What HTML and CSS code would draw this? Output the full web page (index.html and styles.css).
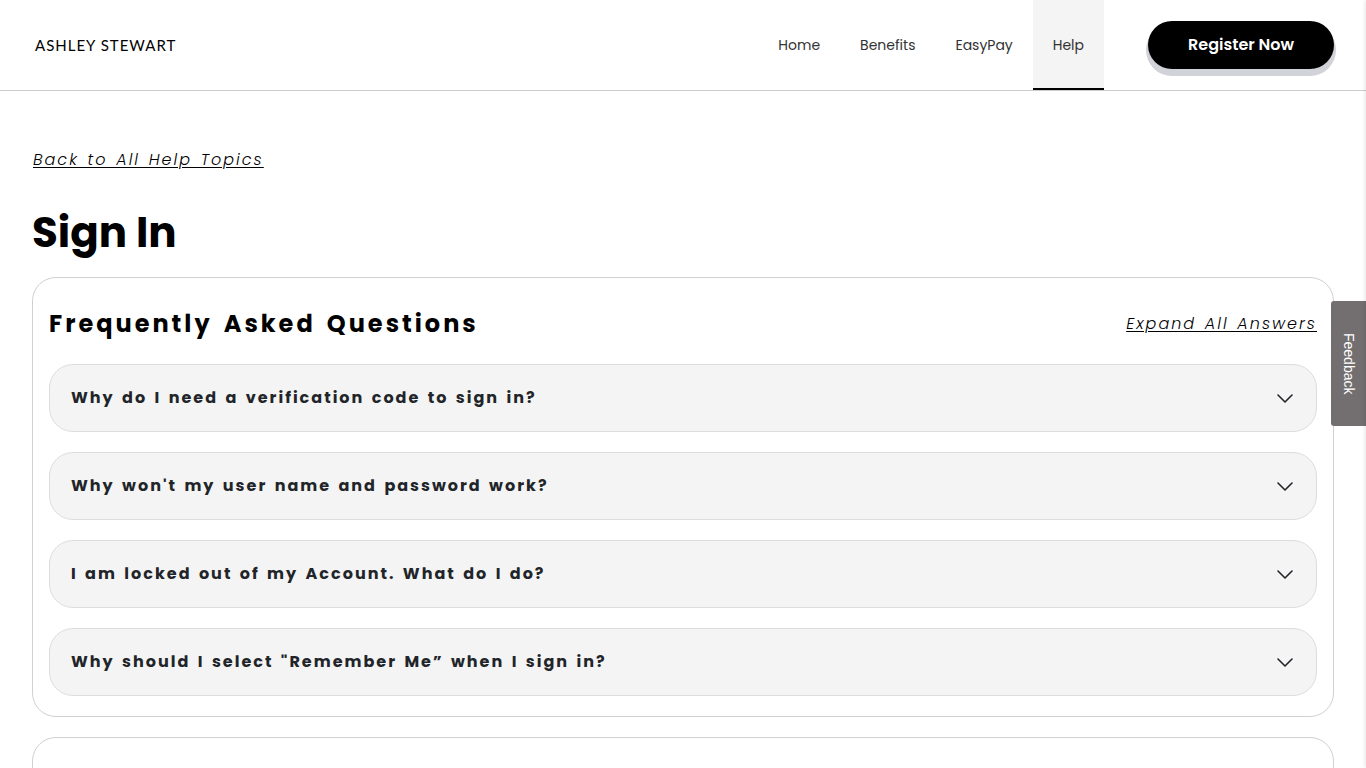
FILE: index.html
```html
<!doctype html>
<html lang="en">
<head>
    <meta charset="utf-8">
    <meta name="viewport" content="width=device-width, initial-scale=1">
    <title>Sign In</title>
    <link rel="stylesheet" href="styles.css">
</head>

<body>
<header class="header">
    <a class="logo" href="#">ASHLEY STEWART</a>
    <nav class="nav">
        <a class="nav-link" href="#">Home</a>
        <a class="nav-link" href="#">Benefits</a>
        <a class="nav-link" href="#">EasyPay</a>
        <a class="nav-link active" href="#">Help</a>
    </nav>
    <button class="register" type="button">Register Now</button>
</header>

<main class="content">
    <a class="text-link" href="#">Back to All Help Topics</a>
    <h1>Sign In</h1>

    <section class="card">
        <div class="card-head">
            <h2>Frequently Asked Questions</h2>
            <a class="text-link" href="#">Expand All Answers</a>
        </div>
        <div class="questions">
            <button class="question" type="button">
                <span>Why do I need a verification code to sign in?</span>
                <svg class="chevron" viewBox="0 0 16 16"><path d="M1 5l7 7 7-7"/></svg>
            </button>
            <button class="question" type="button">
                <span>Why won't my user name and password work?</span>
                <svg class="chevron" viewBox="0 0 16 16"><path d="M1 5l7 7 7-7"/></svg>
            </button>
            <button class="question" type="button">
                <span>I am locked out of my Account. What do I do?</span>
                <svg class="chevron" viewBox="0 0 16 16"><path d="M1 5l7 7 7-7"/></svg>
            </button>
            <button class="question" type="button">
                <span>Why should I select "Remember Me” when I sign in?</span>
                <svg class="chevron" viewBox="0 0 16 16"><path d="M1 5l7 7 7-7"/></svg>
            </button>
        </div>
    </section>

    <section class="card card-next"></section>
</main>

<button class="feedback" type="button">Feedback</button>
<div class="side-panel"></div>
</body>
</html>
```

FILE: styles.css
```css
* {
    box-sizing: border-box;
}
body {
    margin: 0;
    overflow-x: hidden;
    background: #fff;
    color: #000;
    font-family: Poppins, Inter, sans-serif;
    font-size: 16px;
    line-height: 24px;
}
button {
    border: 0;
    font-family: inherit;
    cursor: pointer;
}

/* header */
.header {
    display: flex;
    align-items: center;
    height: 91px;
    padding: 0 32px;
    border-bottom: 1px solid #ccc;
}
.logo {
    margin-right: auto;
    padding-left: 3px;
    color: #000;
    font-family: Lato, sans-serif;
    font-size: 15px;
    letter-spacing: 1px;
    text-decoration: none;
}
.nav {
    display: flex;
    align-self: stretch;
}
.nav-link {
    display: flex;
    align-items: center;
    padding: 2px 20px 0;
    border-bottom: 2px solid transparent;
    color: #333;
    font-size: 14px;
    text-decoration: none;
}
.nav-link.active {
    background: #f4f4f4;
    border-bottom-color: #000;
}
.register {
    height: 48px;
    margin-left: 44px;
    padding: 0 40px 2px;
    border-radius: 24px;
    background: #000;
    box-shadow: 0 5px 0 2px #d1d3d9;
    color: #fff;
    font-size: 16px;
    font-weight: 600;
}

/* page */
.content {
    padding: 57px 32px 0;
}
.text-link {
    padding-left: 1px;
    color: #000;
    font-style: italic;
    font-weight: 300;
    letter-spacing: 2px;
    word-spacing: 2px;
    text-underline-offset: 2px;
}
h1 {
    margin: 32px 0 15px;
    font-size: 42px;
    line-height: 58px;
}
.card {
    margin-bottom: 20px;
    padding: 0 16px 20px;
    border: 1px solid #d0d0d0;
    border-radius: 24px;
}
.card-next {
    padding-top: 160px;
}
.card-head {
    display: flex;
    align-items: center;
    justify-content: space-between;
    padding: 28px 0 22px;
}
h2 {
    margin: 0;
    font-size: 24px;
    font-weight: 700;
    line-height: 36px;
    letter-spacing: 3px;
    word-spacing: 3px;
}
.questions {
    display: flex;
    flex-direction: column;
    gap: 20px;
}
.question {
    display: flex;
    align-items: center;
    justify-content: space-between;
    padding: 21px 23px 21px 21px;
    border: 1px solid #ddd;
    border-radius: 24px;
    background: #f4f4f4;
    color: #212529;
    font-size: 16px;
    font-weight: 700;
    line-height: 24px;
    letter-spacing: 2px;
    word-spacing: 2px;
    text-align: left;
}
.chevron {
    width: 16px;
    height: 16px;
    fill: none;
    stroke: #212529;
    stroke-width: 1.6;
    stroke-linecap: round;
    stroke-linejoin: round;
}

/* feedback tab */
.feedback {
    position: fixed;
    top: 301px;
    right: 0;
    width: 35px;
    height: 125px;
    padding: 0;
    border-radius: 3px 0 0 3px;
    background: #736e6f;
    color: #fff;
    font-family: "Liberation Sans", Arial, sans-serif;
    font-size: 14px;
    writing-mode: vertical-rl;
}
.side-panel {
    position: fixed;
    top: 0;
    bottom: 0;
    left: 100%;
    width: 300px;
    box-shadow: 0 0 5px rgba(0, 0, 0, 0.15);
}
```
